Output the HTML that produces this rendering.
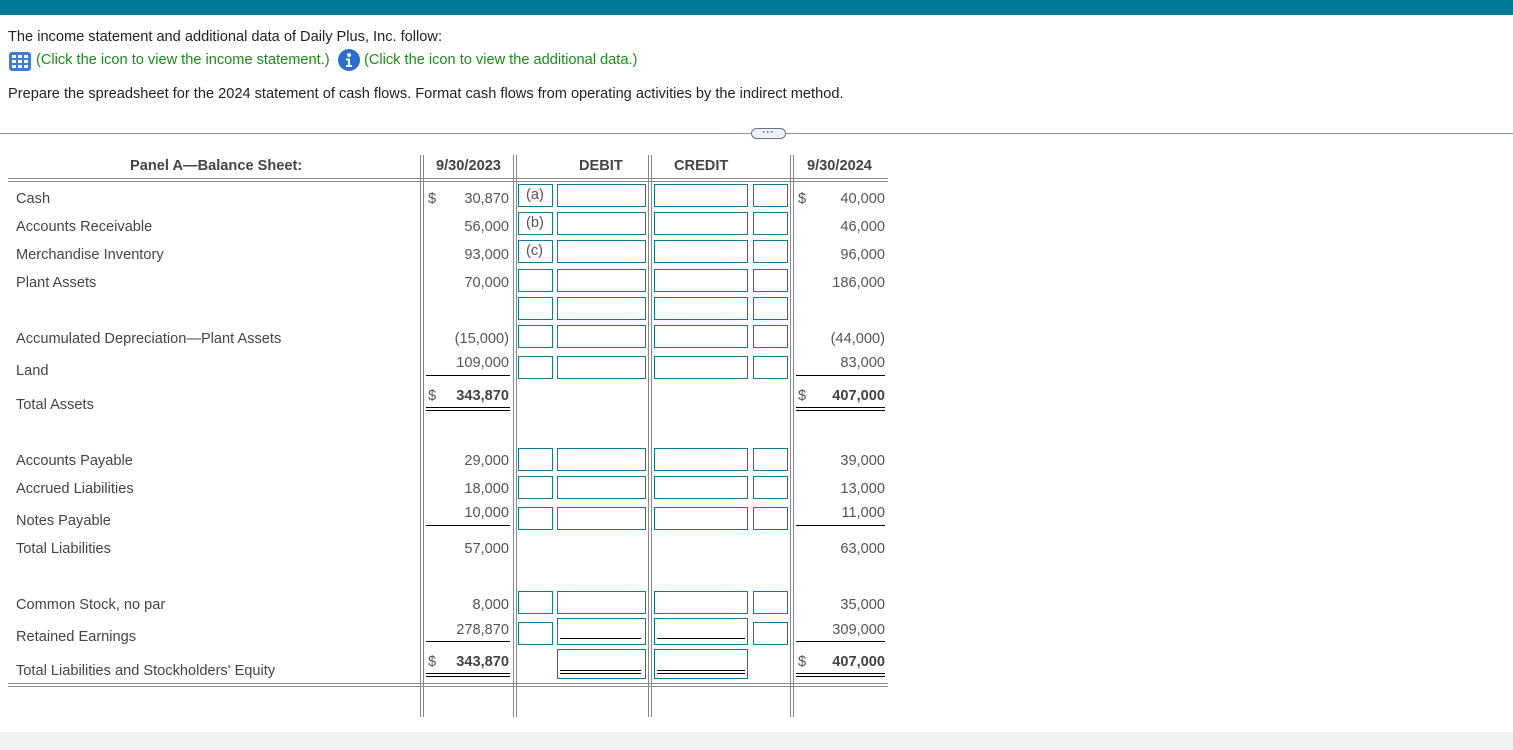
<!DOCTYPE html>
<html><head><meta charset="utf-8"><style>
*{margin:0;padding:0;box-sizing:border-box}
body{width:1513px;height:750px;position:relative;background:#fff;font-family:"Liberation Sans",Arial,sans-serif;font-size:14.6px;color:#222;overflow:hidden}
.a{position:absolute}
.t{position:absolute;line-height:16px;white-space:nowrap;color:#444;margin-top:1px}
.n{position:absolute;line-height:16px;white-space:nowrap;color:#555;text-align:right;margin-top:1px}
.b{font-weight:bold;color:#444}
.bx{position:absolute;border:1px solid #0e7a96;height:23px}
.bx .t{margin-top:0}
.vl{position:absolute;width:1px;background:#888;top:155px;height:562px}
.hl{position:absolute;height:1px;background:#888;left:8px;width:880px}
.ul{position:absolute;height:1px;background:#000}
</style></head><body>
<div class="a" style="left:0;top:0;width:1513px;height:15px;background:#00799b"></div>
<div class="t" style="left:8px;top:28px;color:#222">The income statement and additional data of Daily Plus, Inc. follow:</div>
<svg class="a" style="left:9px;top:52px" width="22" height="19" viewBox="0 0 22 19"><rect x="0" y="0" width="22" height="19" rx="3" fill="#3b7dd8"/><g fill="#fff"><rect x="3" y="3" width="4" height="3"/><rect x="9" y="3" width="4" height="3"/><rect x="15" y="3" width="4" height="3"/><rect x="3" y="8" width="4" height="3"/><rect x="9" y="8" width="4" height="3"/><rect x="15" y="8" width="4" height="3"/><rect x="3" y="13" width="4" height="3"/><rect x="9" y="13" width="4" height="3"/><rect x="15" y="13" width="4" height="3"/></g></svg>
<div class="t" style="left:36px;top:51px;color:#1e8a1e">(Click the icon to view the income statement.)</div>
<svg class="a" style="left:338px;top:49px" width="22" height="22" viewBox="0 0 22 22"><circle cx="11" cy="11" r="11" fill="#2a6fce"/><circle cx="11" cy="6" r="2" fill="#fff"/><path d="M8 9.5h4v6.5h2v2H8v-2h2v-4.5H8z" fill="#fff"/></svg>
<div class="t" style="left:364px;top:51px;color:#1e8a1e">(Click the icon to view the additional data.)</div>
<div class="t" style="left:8px;top:85px;color:#222">Prepare the spreadsheet for the 2024 statement of cash flows. Format cash flows from operating activities by the indirect method.</div>
<div class="a" style="left:0;top:133px;width:1513px;height:1px;background:#8a93a0"></div>
<div class="a" style="left:751px;top:128px;width:35px;height:11px;border:1px solid #6a7480;border-radius:6px;background:#eef1f5;font-size:9px;line-height:7px;text-align:center;color:#444;letter-spacing:1px;font-weight:bold">···</div>

<div class="t b" style="left:130px;top:157px">Panel A—Balance Sheet:</div>
<div class="t b" style="left:436px;top:157px">9/30/2023</div>
<div class="t b" style="left:579px;top:157px">DEBIT</div>
<div class="t b" style="left:674px;top:157px">CREDIT</div>
<div class="t b" style="left:807px;top:157px">9/30/2024</div>

<div class="hl" style="top:178px"></div><div class="hl" style="top:181px"></div>
<div class="hl" style="top:683px"></div><div class="hl" style="top:686px"></div>
<div class="vl" style="left:420px"></div><div class="vl" style="left:423px"></div>
<div class="vl" style="left:513px"></div><div class="vl" style="left:516px"></div>
<div class="vl" style="left:648px"></div><div class="vl" style="left:651px"></div>
<div class="vl" style="left:790px"></div><div class="vl" style="left:793px"></div>

<div class="t" style="left:16px;top:190px">Cash</div>
<div class="t" style="left:16px;top:218px">Accounts Receivable</div>
<div class="t" style="left:16px;top:246px">Merchandise Inventory</div>
<div class="t" style="left:16px;top:274px">Plant Assets</div>
<div class="t" style="left:16px;top:330px">Accumulated Depreciation—Plant Assets</div>
<div class="t" style="left:16px;top:362px">Land</div>
<div class="t" style="left:16px;top:396px">Total Assets</div>
<div class="t" style="left:16px;top:452px">Accounts Payable</div>
<div class="t" style="left:16px;top:480px">Accrued Liabilities</div>
<div class="t" style="left:16px;top:512px">Notes Payable</div>
<div class="t" style="left:16px;top:540px">Total Liabilities</div>
<div class="t" style="left:16px;top:596px">Common Stock, no par</div>
<div class="t" style="left:16px;top:628px">Retained Earnings</div>
<div class="t" style="left:16px;top:662px">Total Liabilities and Stockholders' Equity</div>

<div class="n" style="left:428px;top:190px">$</div>
<div class="n" style="right:1004px;top:190px">30,870</div>
<div class="n" style="right:1004px;top:218px">56,000</div>
<div class="n" style="right:1004px;top:246px">93,000</div>
<div class="n" style="right:1004px;top:274px">70,000</div>
<div class="n" style="right:1004px;top:330px">(15,000)</div>
<div class="n" style="right:1004px;top:354px">109,000</div>
<div class="ul" style="left:426px;width:84px;top:375px"></div>
<div class="n" style="left:428px;top:387px">$</div>
<div class="n b" style="right:1004px;top:387px">343,870</div>
<div class="ul" style="left:426px;width:84px;top:407px"></div><div class="ul" style="left:426px;width:84px;top:410px"></div>
<div class="n" style="right:1004px;top:452px">29,000</div>
<div class="n" style="right:1004px;top:480px">18,000</div>
<div class="n" style="right:1004px;top:504px">10,000</div>
<div class="ul" style="left:426px;width:84px;top:525px"></div>
<div class="n" style="right:1004px;top:540px">57,000</div>
<div class="n" style="right:1004px;top:596px">8,000</div>
<div class="n" style="right:1004px;top:621px">278,870</div>
<div class="ul" style="left:426px;width:84px;top:641px"></div>
<div class="n" style="left:428px;top:653px">$</div>
<div class="n b" style="right:1004px;top:653px">343,870</div>
<div class="ul" style="left:426px;width:84px;top:673px"></div><div class="ul" style="left:426px;width:84px;top:676px"></div>

<div class="n" style="left:798px;top:190px">$</div>
<div class="n" style="right:628px;top:190px">40,000</div>
<div class="n" style="right:628px;top:218px">46,000</div>
<div class="n" style="right:628px;top:246px">96,000</div>
<div class="n" style="right:628px;top:274px">186,000</div>
<div class="n" style="right:628px;top:330px">(44,000)</div>
<div class="n" style="right:628px;top:354px">83,000</div>
<div class="ul" style="left:796px;width:89px;top:375px"></div>
<div class="n" style="left:798px;top:387px">$</div>
<div class="n b" style="right:628px;top:387px">407,000</div>
<div class="ul" style="left:796px;width:89px;top:407px"></div><div class="ul" style="left:796px;width:89px;top:410px"></div>
<div class="n" style="right:628px;top:452px">39,000</div>
<div class="n" style="right:628px;top:480px">13,000</div>
<div class="n" style="right:628px;top:504px">11,000</div>
<div class="ul" style="left:796px;width:89px;top:525px"></div>
<div class="n" style="right:628px;top:540px">63,000</div>
<div class="n" style="right:628px;top:596px">35,000</div>
<div class="n" style="right:628px;top:621px">309,000</div>
<div class="ul" style="left:796px;width:89px;top:641px"></div>
<div class="n" style="left:798px;top:653px">$</div>
<div class="n b" style="right:628px;top:653px">407,000</div>
<div class="ul" style="left:796px;width:89px;top:673px"></div><div class="ul" style="left:796px;width:89px;top:676px"></div>

<div class="bx" style="left:518px;top:184px;width:35px"><span class="t" style="left:7px;top:2px;color:#555">(a)</span></div>
<div class="bx" style="left:518px;top:212px;width:35px"><span class="t" style="left:7px;top:2px;color:#555">(b)</span></div>
<div class="bx" style="left:518px;top:240px;width:35px"><span class="t" style="left:7px;top:2px;color:#555">(c)</span></div>
<div class="bx" style="left:518px;top:269px;width:35px"></div>
<div class="bx" style="left:518px;top:297px;width:35px"></div>
<div class="bx" style="left:518px;top:325px;width:35px"></div>
<div class="bx" style="left:518px;top:356px;width:35px"></div>
<div class="bx" style="left:518px;top:448px;width:35px"></div>
<div class="bx" style="left:518px;top:476px;width:35px"></div>
<div class="bx" style="left:518px;top:507px;width:35px"></div>
<div class="bx" style="left:518px;top:591px;width:35px"></div>
<div class="bx" style="left:518px;top:622px;width:35px"></div>

<div class="bx" style="left:557px;top:184px;width:89px"></div><div class="bx" style="left:654px;top:184px;width:94px"></div><div class="bx" style="left:753px;top:184px;width:35px"></div>
<div class="bx" style="left:557px;top:212px;width:89px"></div><div class="bx" style="left:654px;top:212px;width:94px"></div><div class="bx" style="left:753px;top:212px;width:35px"></div>
<div class="bx" style="left:557px;top:240px;width:89px"></div><div class="bx" style="left:654px;top:240px;width:94px"></div><div class="bx" style="left:753px;top:240px;width:35px"></div>
<div class="bx" style="left:557px;top:269px;width:89px"></div><div class="bx" style="left:654px;top:269px;width:94px"></div><div class="bx" style="left:753px;top:269px;width:35px"></div>
<div class="bx" style="left:557px;top:297px;width:89px"></div><div class="bx" style="left:654px;top:297px;width:94px"></div><div class="bx" style="left:753px;top:297px;width:35px"></div>
<div class="bx" style="left:557px;top:325px;width:89px"></div><div class="bx" style="left:654px;top:325px;width:94px"></div><div class="bx" style="left:753px;top:325px;width:35px"></div>
<div class="bx" style="left:557px;top:356px;width:89px"></div><div class="bx" style="left:654px;top:356px;width:94px"></div><div class="bx" style="left:753px;top:356px;width:35px"></div>
<div class="bx" style="left:557px;top:448px;width:89px"></div><div class="bx" style="left:654px;top:448px;width:94px"></div><div class="bx" style="left:753px;top:448px;width:35px"></div>
<div class="bx" style="left:557px;top:476px;width:89px"></div><div class="bx" style="left:654px;top:476px;width:94px"></div><div class="bx" style="left:753px;top:476px;width:35px"></div>
<div class="bx" style="left:557px;top:507px;width:89px"></div><div class="bx" style="left:654px;top:507px;width:94px"></div><div class="bx" style="left:753px;top:507px;width:35px"></div>
<div class="bx" style="left:557px;top:591px;width:89px"></div><div class="bx" style="left:654px;top:591px;width:94px"></div><div class="bx" style="left:753px;top:591px;width:35px"></div>
<div class="bx" style="left:557px;top:618px;width:89px;height:27px"></div><div class="bx" style="left:654px;top:618px;width:94px;height:27px"></div><div class="bx" style="left:753px;top:622px;width:35px"></div>
<div class="ul" style="left:560px;width:81px;top:638px"></div><div class="ul" style="left:657px;width:88px;top:638px"></div>
<div class="bx" style="left:557px;top:649px;width:89px;height:30px"></div><div class="bx" style="left:654px;top:649px;width:94px;height:30px"></div>
<div class="ul" style="left:560px;width:81px;top:670px"></div><div class="ul" style="left:560px;width:81px;top:673px"></div>
<div class="ul" style="left:657px;width:88px;top:670px"></div><div class="ul" style="left:657px;width:88px;top:673px"></div>

<div class="a" style="left:0;top:732px;width:1513px;height:18px;background:#f2f2f2"></div>
</body></html>
